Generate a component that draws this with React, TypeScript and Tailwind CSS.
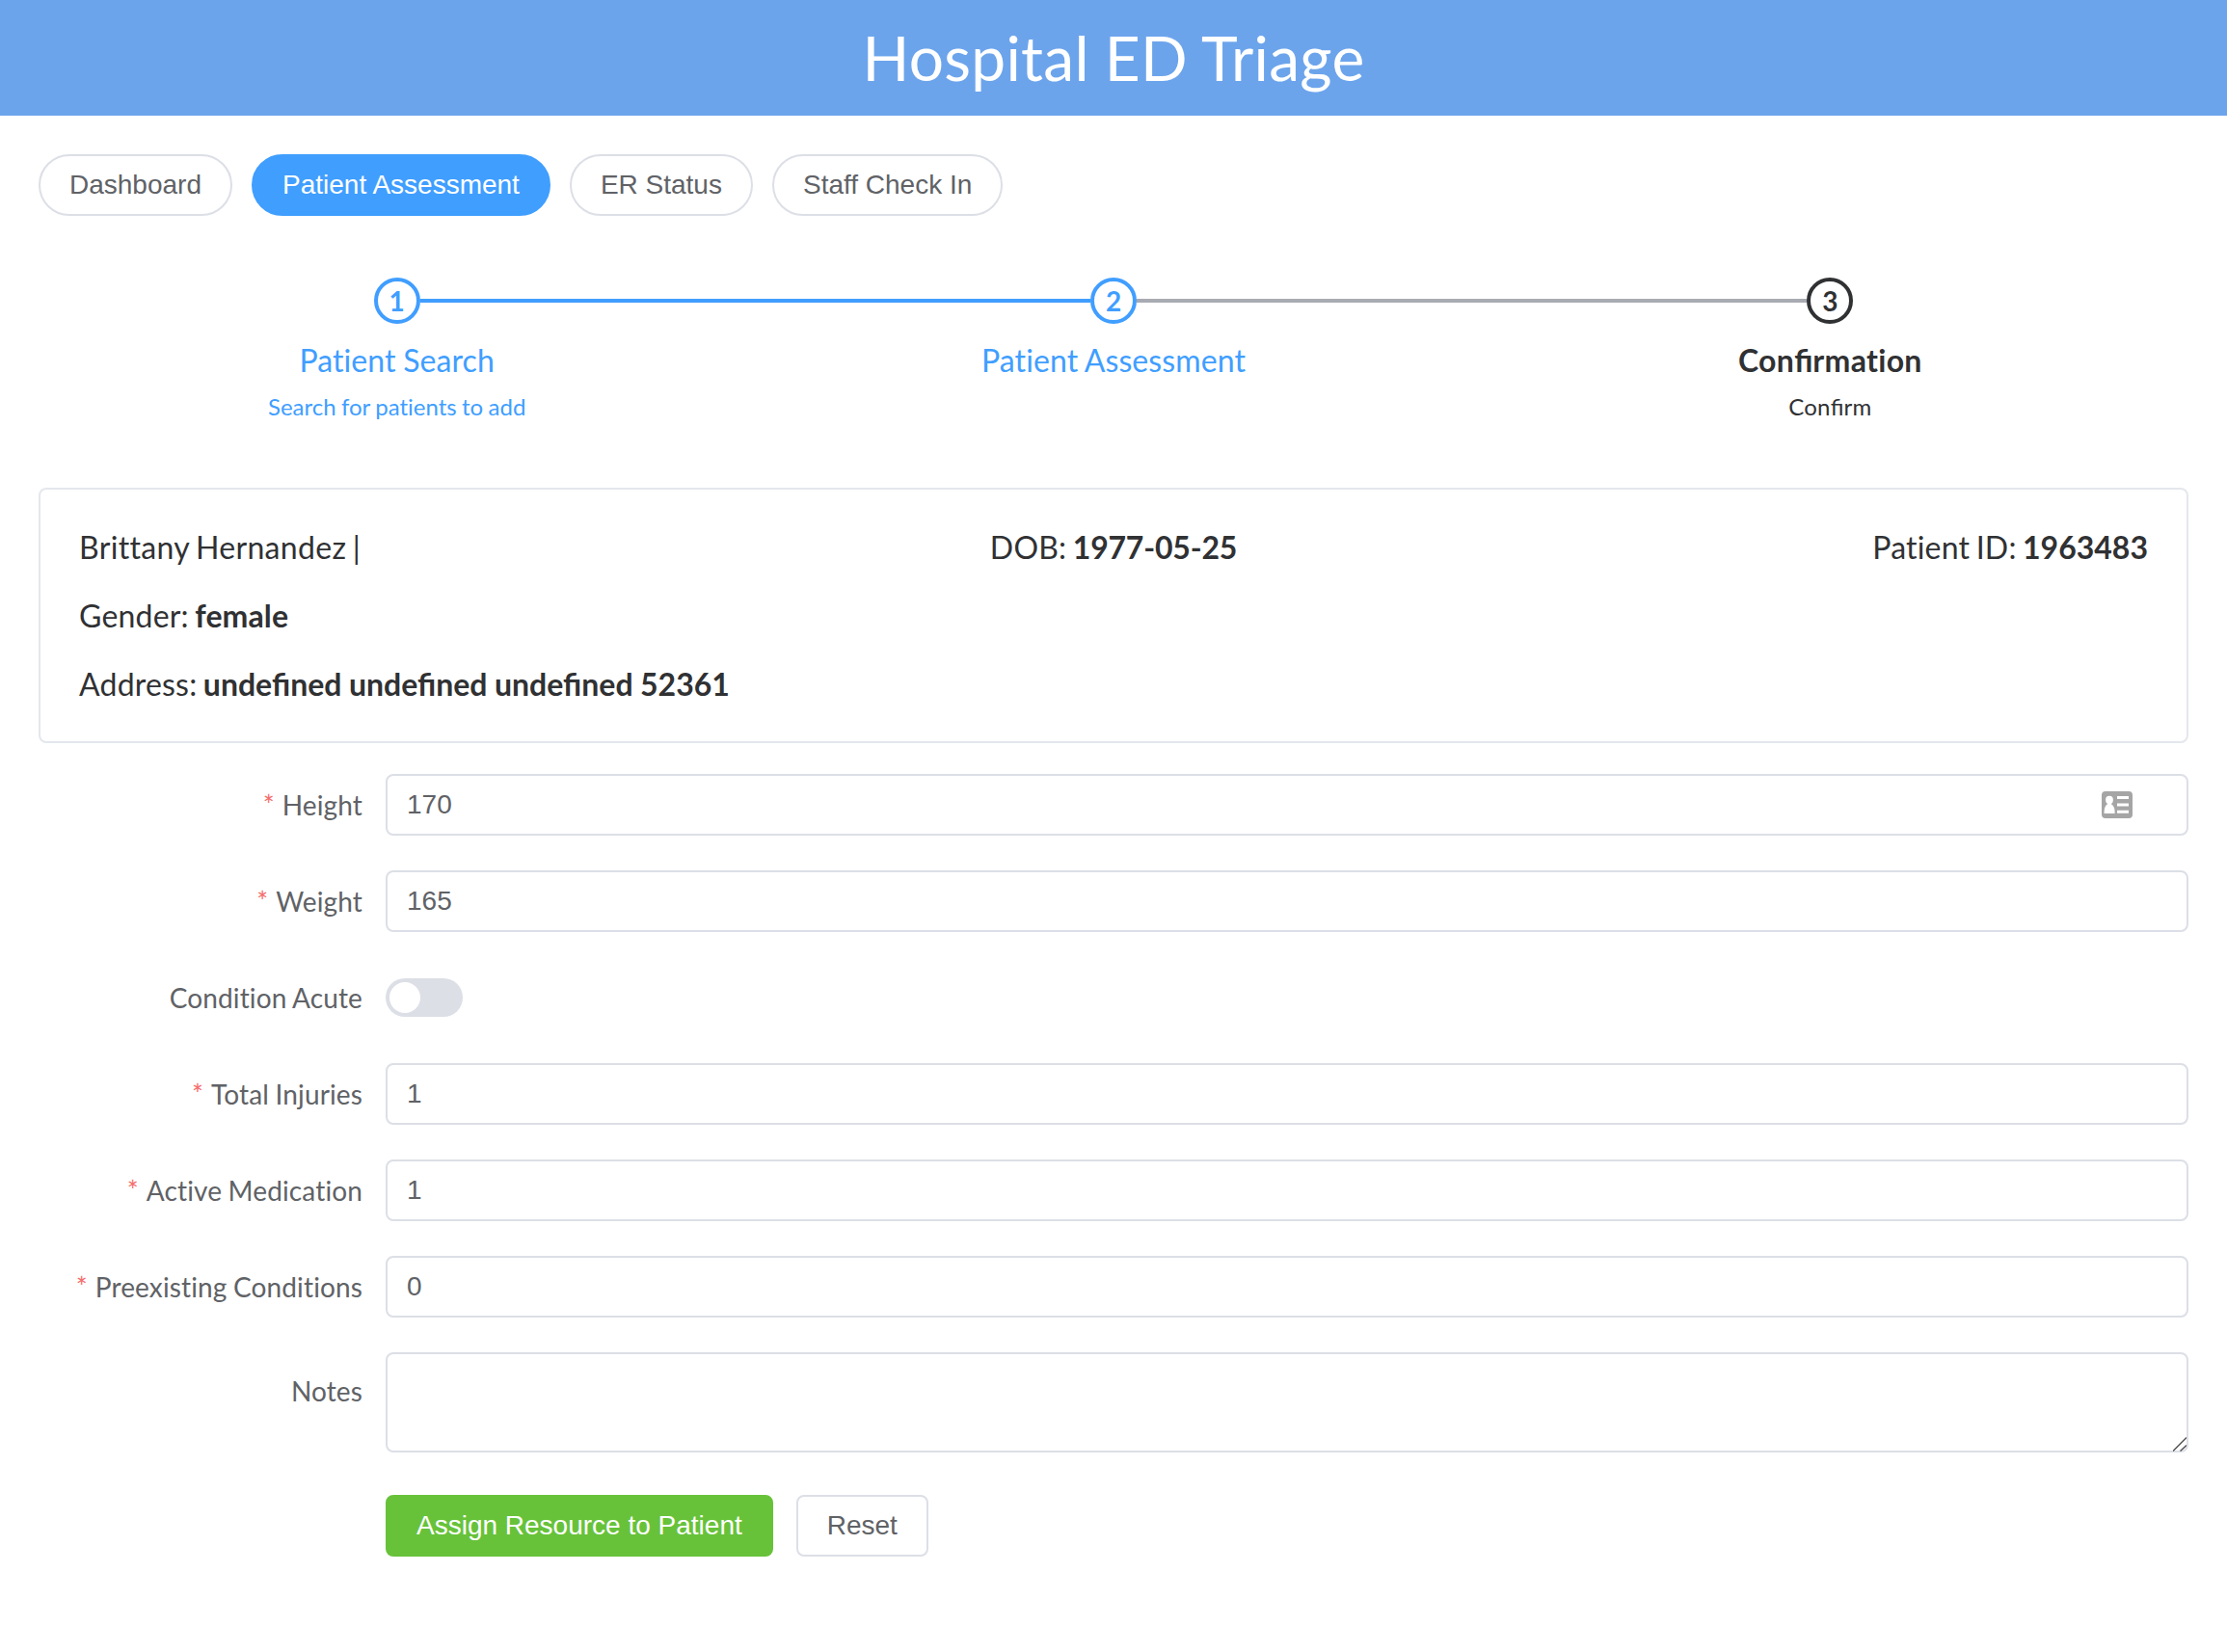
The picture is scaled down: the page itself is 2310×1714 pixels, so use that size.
import React from "react";
import clsx from "clsx";

const tabs = ["Dashboard", "Patient Assessment", "ER Status", "Staff Check In"];

function Tab({ label, active }: { label: string; active: boolean }) {
  return (
    <button
      className={clsx(
        "flex h-16 items-center rounded-full border-2 px-[30px] font-['Liberation_Sans',sans-serif] text-[28px] leading-7 tracking-normal [word-spacing:0]",
        active ? "border-[#409eff] bg-[#409eff] text-white" : "border-[#dcdfe6] bg-white text-[#606266]",
      )}
    >
      {label}
    </button>
  );
}

/* Keeps the "fi" ligature while the surrounding text has ligatures off. */
function Fi() {
  return <span className="tracking-normal [font-variant-ligatures:normal]">fi</span>;
}

const steps: { key: string; title: React.ReactNode; description: React.ReactNode; done: boolean; left: string; right: string }[] = [
  { key: "search", title: "Patient Search", description: "Search for patients to add", done: true, left: "bg-transparent", right: "bg-[#409eff]" },
  { key: "assessment", title: "Patient Assessment", description: "", done: true, left: "bg-[#409eff]", right: "bg-[#a8abb2]" },
  { key: "confirmation", title: <>Con<Fi />rmation</>, description: <>Con<Fi />rm</>, done: false, left: "bg-[#a8abb2]", right: "bg-transparent" },
];

function Steps() {
  return (
    <div className="mt-16 grid h-[218px] grid-cols-3">
      {steps.map((step, i) => (
        <div key={step.key} className={clsx("text-center", step.done ? "text-[#409eff]" : "text-[#303133]")}>
          <div className="flex items-center">
            <div className={clsx("h-1 flex-1", step.left)} />
            <div className="flex size-12 items-center justify-center rounded-full border-4 border-current text-[28px] leading-7 font-bold tracking-normal">
              {i + 1}
            </div>
            <div className={clsx("h-1 flex-1", step.right)} />
          </div>
          <div className={clsx("text-[32px] leading-[76px]", step.done ? "tracking-[0.1px]" : "font-bold tracking-[0.3px]")}>{step.title}</div>
          <div className={clsx("-mt-2.5 text-2xl leading-10", step.done ? "tracking-normal" : "tracking-[0.2px]")}>{step.description}</div>
        </div>
      ))}
    </div>
  );
}

function PatientCard() {
  return (
    <section className="h-[265px] rounded-lg border-2 border-[#e4e7ed] px-10 pt-10 text-[32px] leading-[39px] tracking-[0.2px] text-[#303133] [word-spacing:-0.06em]">
      <div className="grid grid-cols-3">
        <p className="tracking-[0.33px]">Brittany Hernandez |</p>
        <p className="text-center">
          DOB: <b className="font-bold tracking-[-0.2px]">1977-05-25</b>
        </p>
        <p className="text-right">
          Patient ID: <b className="font-bold tracking-normal">1963483</b>
        </p>
      </div>
      <p className="mt-8">
        Gender: <b className="font-bold tracking-[0.1px]">female</b>
      </p>
      <p className="mt-8">
        Address:{" "}
        <b className="font-bold tracking-normal [font-variant-ligatures:normal] [word-spacing:-0.01em]">
          undefined undefined undefined 52361
        </b>
      </p>
    </section>
  );
}

function ContactCardIcon() {
  return (
    <svg width="32" height="28" viewBox="0 0 32 28" className="mr-14">
      <rect width="32" height="28" rx="4" fill="#a5a5a5" />
      <ellipse cx="8" cy="8.9" rx="3.9" ry="4.2" fill="#fff" />
      <path d="M2.6 23v-2.2c0-4 1.9-6.6 3.6-7.8h3.6c1.7 1.2 3.8 3.8 3.8 7.8V23z" fill="#fff" />
      <path d="M16 5h12v3H16zM16 12.4h12v3H16zM16 19.8h12v3H16z" fill="#fff" />
    </svg>
  );
}

function FormRow({ label, required, tall, children }: { label: string; required?: boolean; tall?: boolean; children: React.ReactNode }) {
  return (
    <div className="flex">
      <div
        className={clsx(
          "w-[360px] shrink-0 pr-6 text-right text-[28px] tracking-[0.13px] text-[#606266]",
          tall ? "leading-[80px]" : "leading-[64px]",
        )}
      >
        {required && <span className="mr-2 text-[#f56c6c]">*</span>}
        {label}
      </div>
      <div className="flex min-h-16 flex-1 items-center">{children}</div>
    </div>
  );
}

function Field({ value, icon }: { value: string; icon?: React.ReactNode }) {
  return (
    <div className="flex h-16 flex-1 items-center justify-between rounded-lg border-2 border-[#dcdfe6] px-5 font-['Liberation_Sans',sans-serif] text-[28px] leading-8 tracking-normal text-[#606266]">
      <span>{value}</span>
      {icon && <span className="-mr-5">{icon}</span>}
    </div>
  );
}

export default function App() {
  return (
    <div className="h-[1714px] bg-white font-['Lato',sans-serif] [font-variant-ligatures:no-common-ligatures] [word-spacing:-0.05em]">
      <header className="flex h-[120px] items-center justify-center bg-[#6ca4ec] pb-0.5 text-[64px] leading-[77px] tracking-[0.3px] text-white">
        <h1>Hospital ED Triage</h1>
      </header>
      <main className="px-10 pt-10">
        <nav className="flex gap-5">
          {tabs.map((t) => (
            <Tab key={t} label={t} active={t === "Patient Assessment"} />
          ))}
        </nav>
        <Steps />
        <PatientCard />
        <form className="mt-8 flex flex-col gap-9">
          <FormRow label="Height" required>
            <Field value="170" icon={<ContactCardIcon />} />
          </FormRow>
          <FormRow label="Weight" required>
            <Field value="165" />
          </FormRow>
          <FormRow label="Condition Acute">
            <span className="flex h-10 w-20 items-center rounded-full bg-[#dcdfe6] px-1">
              <span className="size-8 rounded-full bg-white" />
            </span>
          </FormRow>
          <FormRow label="Total Injuries" required>
            <Field value="1" />
          </FormRow>
          <FormRow label="Active Medication" required>
            <Field value="1" />
          </FormRow>
          <FormRow label="Preexisting Conditions" required>
            <Field value="0" />
          </FormRow>
          <FormRow label="Notes" tall>
            <div className="flex h-[104px] flex-1 items-end justify-end rounded-lg border-2 border-[#dcdfe6]">
              <svg width="14" height="15" viewBox="0 0 14 15" className="-mb-px" fill="none" stroke="#555" strokeWidth="1.5">
                <path d="M0 14.5 14 .5M7.5 14.5 14 8.5" />
              </svg>
            </div>
          </FormRow>
          <div className="mt-2 ml-[360px] flex gap-6 font-['Liberation_Sans',sans-serif] text-[28px] leading-7 [word-spacing:0]">
            <button type="button" className="h-16 rounded-lg border-2 border-[#67c23a] bg-[#67c23a] px-[30px] text-white">
              Assign Resource to Patient
            </button>
            <button type="button" className="h-16 rounded-lg border-2 border-[#dcdfe6] px-[30px] text-[#606266]">
              Reset
            </button>
          </div>
        </form>
      </main>
    </div>
  );
}
